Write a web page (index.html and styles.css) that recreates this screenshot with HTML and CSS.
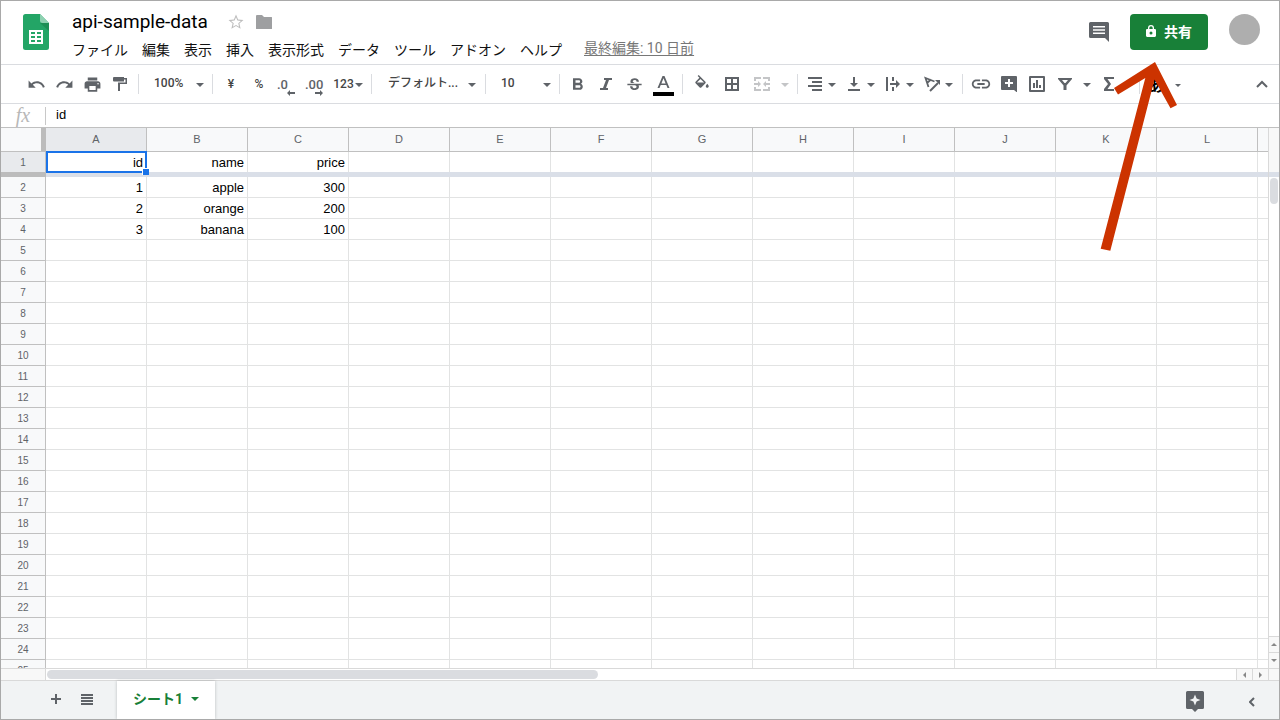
FILE: index.html
```html
<!DOCTYPE html>
<html lang="ja">
<head>
<meta charset="utf-8">
<meta name="viewport" content="width=device-width, initial-scale=1">
<title>api-sample-data</title>
<link rel="stylesheet" href="styles.css">
</head>
<body>
<svg class="sprite" aria-hidden="true">
  <symbol id="caret" viewBox="0 0 8 4"><path d="M0 0h8L4 4z"/></symbol>
</svg>
<div class="app">
  <header class="header">
    <svg class="logo" viewBox="0 0 26 36" aria-hidden="true">
      <path fill="#23a566" d="M2.500 0H17l9 9v24.500a2.500 2.500 0 0 1-2.500 2.500h-21A2.500 2.500 0 0 1 0 33.500v-31A2.500 2.500 0 0 1 2.500 0z"/>
      <path fill="#1c8f55" d="M17 9h9v8z"/>
      <path fill="#8ed1b1" d="M17 0l9 9h-6.500A2.500 2.500 0 0 1 17 6.500z"/>
      <path fill="#fff" fill-rule="evenodd" d="M6 16h14v14H6zM8 18v2h4v-2zm6 0v2h4v-2zM8 22v2h4v-2zm6 0v2h4v-2zM8 26v2h4v-2zm6 0v2h4v-2z"/>
    </svg>
    <div class="doc">
      <div class="title-row">
        <h1 class="title">api-sample-data</h1>
        <button class="plain" aria-label="スター"><svg width="18" height="18" viewBox="0 0 24 24" fill="#bdbdbd"><path d="M22 9.240l-7.190-.62L12 2 9.190 8.630 2 9.240l5.460 4.730L5.820 21 12 17.270 18.180 21l-1.630-7.030L22 9.240zM12 15.900l-4.100 2.500 1.100-4.700-3.600-3.150 4.750-.4L12 5.800l1.850 4.350 4.750.4-3.600 3.150 1.100 4.700z"/></svg></button>
        <button class="plain" aria-label="移動"><svg width="16" height="14" viewBox="0 0 16 14" fill="#9e9fa1"><path d="M1 0h5l2 2h7.500a.5.5 0 0 1 .5.500v11a.5.5 0 0 1-.5.500H.5a.5.5 0 0 1-.5-.5V1a1 1 0 0 1 1-1z"/></svg></button>
      </div>
      <nav class="menu">
        <button>ファイル</button><button>編集</button><button>表示</button><button>挿入</button><button>表示形式</button><button>データ</button><button>ツール</button><button>アドオン</button><button>ヘルプ</button>
        <a class="edited" href="#">最終編集: 10 日前</a>
      </nav>
    </div>
    <div class="actions">
      <button class="plain" aria-label="コメント"><svg width="20" height="20" viewBox="0 0 20 20"><path fill-rule="evenodd" d="M1.500 0h17A1.500 1.500 0 0 1 20 1.500V20l-4-4H1.500A1.500 1.500 0 0 1 0 14.500v-13A1.500 1.500 0 0 1 1.500 0zM4 4v1.500h12V4zm0 3.200v1.600h12V7.200zm0 3.300V12h12v-1.500z"/></svg></button>
      <button class="share"><svg width="10" height="12" viewBox="0 0 10 12" fill="#fff"><path fill-rule="evenodd" d="M2 4V3a3 3 0 0 1 6 0v1h.800c.600 0 1.200.500 1.200 1.200v5.600c0 .700-.600 1.200-1.200 1.200H1.200C.600 12 0 11.500 0 10.800V5.200C0 4.500.600 4 1.200 4zm1.300 0h3.400V3a1.700 1.700 0 0 0-3.400 0zM5 6.500a1.500 1.500 0 1 0 0 3 1.500 1.500 0 0 0 0-3z"/></svg>共有</button>
      <span class="avatar"></span>
    </div>
  </header>

  <div class="toolbar" role="toolbar">
    <button class="tool" aria-label="元に戻す"><svg width="19" height="19" viewBox="0 0 24 24"><path d="M12.500 8c-2.650 0-5.050.990-6.900 2.600L2 7v9h9l-3.620-3.620c1.390-1.160 3.160-1.880 5.120-1.880 3.540 0 6.550 2.310 7.600 5.500l2.370-.780C21.080 11.030 17.150 8 12.500 8z"/></svg></button>
    <button class="tool" aria-label="やり直し"><svg width="19" height="19" viewBox="0 0 24 24"><path d="M18.400 10.600C16.550 8.990 14.150 8 11.500 8c-4.650 0-8.580 3.030-9.960 7.220L3.900 16c1.050-3.190 4.050-5.500 7.600-5.500 1.950 0 3.730.720 5.120 1.880L13 16h9V7l-3.600 3.600z"/></svg></button>
    <button class="tool" aria-label="印刷"><svg width="19" height="19" viewBox="0 0 24 24"><path d="M19 8H5c-1.660 0-3 1.340-3 3v6h4v4h12v-4h4v-6c0-1.660-1.340-3-3-3zm-3 11H8v-5h8v5zm3-7c-.550 0-1-.450-1-1s.450-1 1-1 1 .450 1 1-.450 1-1 1zm-1-9H6v4h12V3z"/></svg></button>
    <button class="tool" aria-label="書式を貼り付け"><svg width="14" height="14" viewBox="0 0 14 14"><path d="M1 0h10v1h3v6H7v7H5V5.500h7.500v-3H11V4.500H1a1 1 0 0 1-1-1V1a1 1 0 0 1 1-1z"/></svg></button>
    <span class="sep"></span>
    <label class="pick pick-short"><select aria-label="ズーム"><option>100%</option></select><svg class="caret"><use href="#caret"/></svg></label>
    <span class="sep"></span>
    <button class="tool">¥</button>
    <button class="tool">%</button>
    <button class="tool decimal">.0<svg width="8" height="6" viewBox="0 0 8 6"><path d="M0 3l3-3v2h5v2H3v2z"/></svg></button>
    <button class="tool decimal">.00<svg width="8" height="6" viewBox="0 0 8 6"><path d="M8 3L5 0v2H0v2h5v2z"/></svg></button>
    <button class="tool number">123<svg class="caret"><use href="#caret"/></svg></button>
    <span class="sep"></span>
    <label class="pick pick-long"><select aria-label="フォント"><option>デフォルト...</option></select><svg class="caret"><use href="#caret"/></svg></label>
    <span class="sep"></span>
    <label class="pick pick-short"><select aria-label="フォントサイズ"><option>10</option></select><svg class="caret"><use href="#caret"/></svg></label>
    <span class="sep"></span>
    <button class="tool" aria-label="太字"><svg width="20" height="20" viewBox="0 0 24 24"><path d="M15.600 11.790c.970-.670 1.650-1.770 1.650-2.790 0-2.260-1.750-4-4-4H6v14h8.040c2.090 0 3.710-1.700 3.710-3.790 0-1.520-.860-2.820-2.150-3.420zM9 7.500h4c.830 0 1.500.670 1.500 1.500s-.670 1.500-1.500 1.500H9zm4.500 9H9v-3h4.500c.830 0 1.500.670 1.500 1.500s-.670 1.500-1.500 1.500z"/></svg></button>
    <button class="tool" aria-label="斜体"><svg width="12" height="12" viewBox="0 0 12 12"><path d="M4 0h8v2H9L6 10h2v2H0v-2h3l3-8H4z"/></svg></button>
    <button class="tool" aria-label="取り消し線"><svg width="19" height="19" viewBox="0 0 24 24"><path d="M6.850 8.080C6.850 5.370 9.450 4 12.240 4c1.640 0 3 .490 3.900 1.280.770.650 1.460 1.730 1.460 3.240h-3.010c0-.310-.050-.590-.150-.850-.290-.860-1.200-1.280-2.250-1.280-1.860 0-2.340 1.020-2.340 1.700 0 .480.250.880.740 1.210.380.250.770.480 1.410.700H7.390c-.210-.340-.540-.890-.540-1.920zM21 13v-2H3v2h9.620c1.150.450 1.960.750 1.960 1.970 0 1-.810 1.670-2.280 1.670-1.540 0-2.930-.540-2.930-2.510H6.400c0 .550.080 1.130.240 1.580.810 2.290 3.290 3.300 5.670 3.300 2.270 0 5.300-.890 5.300-4.050 0-.300-.010-1.160-.480-1.940H21V13z"/></svg></button>
    <button class="tool wide" aria-label="テキストの色"><svg width="21" height="24" viewBox="0 0 21 24"><path d="M9.500 4h2l5 12h-2l-1.200-3H7.700l-1.200 3h-2zm1 2.200L8.400 11.400h4.200z"/><path fill="#000" d="M0 20h21v4H0z"/></svg></button>
    <span class="sep"></span>
    <button class="tool wide" aria-label="塗りつぶしの色"><svg width="18" height="18" viewBox="0 0 24 24"><path d="M16.560 8.940L7.620 0 6.210 1.410l2.380 2.380-5.150 5.150c-.590.590-.590 1.540 0 2.120l5.500 5.500c.290.290.680.440 1.060.440s.770-.150 1.060-.440l5.500-5.500c.590-.580.590-1.530 0-2.120zM5.210 10L10 5.210 14.790 10H5.210zM19 11.500s-2 2.170-2 3.500c0 1.100.900 2 2 2s2-.900 2-2c0-1.330-2-3.500-2-3.500z"/></svg></button>
    <button class="tool wide" aria-label="枠線"><svg width="14" height="14" viewBox="0 0 14 14"><path fill-rule="evenodd" d="M0 0h14v14H0zM2 2v4h4V2zm6 0v4h4V2zM2 8v4h4V8zm6 0v4h4V8z"/></svg></button>
    <button class="tool wide" aria-label="セルを結合" disabled><svg width="16" height="14" viewBox="0 0 16 14"><path d="M0 0h7v2H2v2H0zM9 0h7v4h-2V2H9zM0 10h2v2h5v2H0zM14 10h2v4H9v-2h5zM0 6h4V4l3 3-3 3V8H0zM16 6h-4V4L9 7l3 3V8h4z"/></svg></button>
    <button class="tool drop" aria-label="結合の種類" disabled><svg class="caret"><use href="#caret"/></svg></button>
    <span class="sep"></span>
    <button class="tool combo" aria-label="水平方向の配置"><svg width="18" height="18" viewBox="0 0 18 18"><path d="M2 2h14v2H2zM6 6h10v2H6zM2 10h14v2H2zM6 14h10v2H6z"/></svg><svg class="caret"><use href="#caret"/></svg></button>
    <button class="tool combo" aria-label="垂直方向の配置"><svg width="18" height="18" viewBox="0 0 18 18"><path d="M8 2h2v6h3l-4 4-4-4h3zM3 14h12v2H3z"/></svg><svg class="caret"><use href="#caret"/></svg></button>
    <button class="tool combo" aria-label="テキストを折り返す"><svg width="18" height="18" viewBox="0 0 18 18"><path d="M2 2h2v14H2zM8 2h2v4H8zM8 12h2v4H8zM6 8h6V5l4 4-4 4v-3H6z"/></svg><svg class="caret"><use href="#caret"/></svg></button>
    <button class="tool combo" aria-label="テキストの回転"><svg width="18" height="18" viewBox="0 0 18 18" fill="none" stroke="#5f6368" stroke-width="1.800"><path d="M5.500 12L2.500 3l9 3.500M4 8l4-3.500"/><path stroke-width="2" d="M7 16l8-8"/><path fill="#5f6368" stroke="none" d="M12 5h5v5z"/></svg><svg class="caret"><use href="#caret"/></svg></button>
    <span class="sep"></span>
    <button class="tool" aria-label="リンクを挿入"><svg width="22" height="22" viewBox="0 0 24 24"><path d="M3.900 12c0-1.710 1.390-3.100 3.100-3.100h4V7H7c-2.760 0-5 2.240-5 5s2.240 5 5 5h4v-1.900H7c-1.710 0-3.100-1.390-3.100-3.100zM8 13h8v-2H8v2zm9-6h-4v1.900h4c1.710 0 3.100 1.390 3.100 3.100s-1.390 3.100-3.100 3.100h-4V17h4c2.760 0 5-2.240 5-5s-2.240-5-5-5z"/></svg></button>
    <button class="tool" aria-label="コメントを挿入"><svg width="16" height="16" viewBox="0 0 16 16"><path fill-rule="evenodd" d="M1 0h14a1 1 0 0 1 1 1v15.500L13 14H1a1 1 0 0 1-1-1V1a1 1 0 0 1 1-1zM7 3v3H4v2h3v3h2V8h3V6H9V3z"/></svg></button>
    <button class="tool" aria-label="グラフを挿入"><svg width="16" height="16" viewBox="0 0 16 16"><path fill-rule="evenodd" d="M1 0h14a1 1 0 0 1 1 1v14a1 1 0 0 1-1 1H1a1 1 0 0 1-1-1V1a1 1 0 0 1 1-1zM2 2v12h12V2zM4 7h2v5H4zM7 4h2v8H7zM10 9h2v3h-2z"/></svg></button>
    <button class="tool" aria-label="フィルタを作成"><svg width="14" height="12" viewBox="0 0 14 12"><path fill-rule="evenodd" d="M0 0h14v1L8.500 7.500V12h-3V7.500L0 1zM4 2l2.500 3h1L10 2z"/></svg></button>
    <button class="tool drop" aria-label="フィルタ表示"><svg class="caret"><use href="#caret"/></svg></button>
    <button class="tool" aria-label="関数"><svg width="12" height="14" viewBox="0 0 12 14"><path d="M1 0h10v2H4.500L8 7l-3.500 5H11v2H1v-2l4-5-4-5z"/></svg></button>
    <button class="tool functions" aria-label="その他の関数"></button>
    <span class="sep"></span>
    <button class="tool ime" aria-label="入力ツール">あ</button>
    <button class="tool small" aria-label="入力ツールの選択"><svg class="caret"><use href="#caret"/></svg></button>
    <button class="tool collapse" aria-label="メニューを非表示"><svg width="12" height="8" viewBox="0 0 12 8" fill="none" stroke="#5f6368" stroke-width="2"><path d="M1 7l5-5 5 5"/></svg></button>
  </div>

  <div class="formula">
    <span class="fx">fx</span>
    <input aria-label="数式" value="id">
  </div>

  <main class="sheet">
    <div class="grid">
      <table>
        <colgroup id="cols"></colgroup>
        <thead id="head"></thead>
        <tbody id="body"></tbody>
      </table>
    </div>
    <div class="vscroll">
      <div class="vscroll-head"></div>
      <div class="vscroll-track"><div class="vthumb"></div></div>
      <button class="step" aria-label="上へ"><svg width="6" height="3" viewBox="0 0 6 3"><path d="M0 3h6L3 0z"/></svg></button>
      <button class="step" aria-label="下へ"><svg width="6" height="3" viewBox="0 0 6 3"><path d="M0 0h6L3 3z"/></svg></button>
    </div>
    <div class="hscroll">
      <div class="hscroll-head"></div>
      <div class="hscroll-track"><div class="hthumb"></div></div>
      <button class="step" aria-label="左へ"><svg width="3" height="6" viewBox="0 0 3 6"><path d="M3 0v6L0 3z"/></svg></button>
      <button class="step" aria-label="右へ"><svg width="3" height="6" viewBox="0 0 3 6"><path d="M0 0v6l3-3z"/></svg></button>
    </div>
    <div class="corner"></div>
  </main>

  <footer class="tabs">
    <button class="plain add" aria-label="シートを追加"><svg width="10" height="10" viewBox="0 0 10 10"><path d="M4 0h2v4h4v2H6v4H4V6H0V4h4z"/></svg></button>
    <button class="plain" aria-label="すべてのシート"><svg width="12" height="11" viewBox="0 0 12 11"><path d="M0 0h12v2H0zM0 3h12v2H0zM0 6h12v2H0zM0 9h12v2H0z"/></svg></button>
    <button class="tab">シート1<svg class="caret"><use href="#caret"/></svg></button>
    <div class="tab-actions">
      <button class="plain" aria-label="データ探索"><svg width="18" height="21" viewBox="0 0 18 21"><path fill-rule="evenodd" d="M1.500 0h15A1.500 1.500 0 0 1 18 1.500v15a1.500 1.500 0 0 1-1.500 1.500H12l-3 3-3-3H1.500A1.500 1.500 0 0 1 0 16.500v-15A1.500 1.500 0 0 1 1.500 0zM9 3.500L7.400 7.400 3.500 9l3.900 1.600L9 14.500l1.600-3.900L14.500 9l-3.900-1.600z"/></svg></button>
      <button class="plain" aria-label="サイドパネルを表示"><svg width="6" height="10" viewBox="0 0 6 10" fill="none" stroke="#5f6368" stroke-width="2"><path d="M5 1L1 5l4 4"/></svg></button>
    </div>
  </footer>

  <svg class="pointer" width="78" height="190" viewBox="1100 61 78 190" aria-hidden="true"><path fill="#cc3300" d="M1155 62l22 43-6.500 3.300-16-28.800-44.200 171.200-9.600-2L1145.300 78 1118 94.500l-4-6.500z"/></svg>
</div>
<script src="sheet.js"></script>
</body>
</html>
```
FILE: styles.css
```css
* { box-sizing: border-box; }

body {
  margin: 0;
  font-family: Roboto, "Noto Sans CJK JP", sans-serif;
  color: #000;
  background: #fff;
}

button {
  margin: 0;
  padding: 0;
  border: 0;
  background: none;
  font: inherit;
  color: inherit;
}

svg { flex: none; }
button svg, label svg { fill: #5f6368; }
button svg[fill="none"] { fill: none; }
button svg[fill="#fff"] { fill: #fff; }
button svg[fill="#bdbdbd"] { fill: #bdbdbd; }
button svg[fill="#9e9fa1"] { fill: #9e9fa1; }

.sprite { display: none; }
.caret { width: 8px; height: 4px; }

.app {
  position: relative;
  display: flex;
  flex-direction: column;
  height: 100vh;
  border: 1px solid #a9a9a9;
  overflow: hidden;
}

.plain {
  display: flex;
  align-items: center;
  justify-content: center;
}

.header {
  display: flex;
  align-items: flex-start;
  height: 64px;
  padding-left: 22px;
  padding-right: 19px;
  border-bottom: 1px solid #dadce0;
}

.logo { width: 26px; height: 36px; margin-top: 13px; }
.doc { margin-left: 23px; padding-top: 7px; }
.title-row { display: flex; align-items: center; height: 27px; }
.title {
  margin: 0 19px 0 0;
  font-size: 19px;
  font-weight: 400;
  line-height: 24px;
}
.title-row .plain + .plain { margin-left: 11px; }

.menu {
  display: flex;
  align-items: center;
  gap: 14px;
  height: 30px;
  font-size: 14px;
  line-height: 20px;
  color: #111;
  white-space: nowrap;
}
.edited {
  margin: 0 0 5px 8px;
  color: #777;
  text-underline-offset: 2px;
}

.actions {
  display: flex;
  align-items: flex-start;
  gap: 21px;
  margin-left: auto;
  padding-top: 13px;
}
.actions .plain { height: 36px; }
.share {
  display: flex;
  align-items: center;
  justify-content: center;
  gap: 8px;
  width: 78px;
  height: 36px;
  padding-bottom: 2px;
  border-radius: 4px;
  background: #188038;
  color: #fff;
  font-size: 14px;
  font-weight: 700;
}
.avatar { width: 31px; height: 31px; border-radius: 50%; background: #aeaeae; }

.toolbar {
  display: flex;
  align-items: center;
  height: 39px;
  padding: 0 3px 0 21px;
  border-bottom: 1px solid #dadce0;
  font-size: 12px;
  font-weight: 500;
  color: #444;
}
.tool {
  display: flex;
  flex: none;
  align-items: center;
  justify-content: center;
  width: 28px;
  height: 28px;
}
.tool:disabled svg { fill: #c4c5c7; }
.wide { width: 30px; }
.drop { width: 16px; }
.functions { width: 12px; }
.toolbar .caret { margin-top: 2px; }
.sep { flex: none; width: 1px; height: 20px; margin: 0 4px; background: #dadce0; }

.pick { display: flex; align-items: center; justify-content: space-between; height: 28px; padding: 0 4px 2px 11px; }
.pick .caret { margin-top: 4px; }
.pick-short { width: 65px; }
.pick-long { width: 105px; padding-left: 12px; padding-right: 5px; }
.pick select {
  appearance: none;
  padding: 0;
  border: 0;
  background: none;
  font: inherit;
  color: inherit;
}

.decimal { position: relative; justify-content: flex-start; padding-left: 4px; color: #5f6368; font-size: 13px; }
.decimal svg { position: absolute; right: 6px; bottom: 2px; }
.number { width: 38px; gap: 1px; }
.combo { width: 39px; gap: 4px; justify-content: flex-start; padding-left: 4px; }
.ime { width: 24px; color: #000; font-size: 16px; font-weight: 700; }
.small { width: 20px; }
.small .caret { width: 6px; height: 3px; }
.collapse { margin-left: auto; }

.formula {
  display: flex;
  align-items: center;
  height: 24px;
  border-bottom: 1px solid #c0c0c0;
}
.fx {
  width: 45px;
  height: 18px;
  border-right: 1px solid #c8c8c8;
  font-family: "Liberation Serif", serif;
  font-size: 20px;
  font-style: italic;
  line-height: 16px;
  text-align: center;
  color: #b8b8b8;
}
.formula input {
  flex: 1;
  min-width: 0;
  padding: 0 10px 2px;
  border: 0;
  outline: 0;
  font-family: "Liberation Sans", sans-serif;
  font-size: 13px;
}

.sheet {
  display: grid;
  flex: 1;
  grid-template-columns: minmax(0, 1fr) 11px;
  grid-template-rows: minmax(0, 1fr) 13px;
  min-height: 0;
}
.grid { overflow: hidden; }

table {
  width: 100%;
  table-layout: fixed;
  border-collapse: separate;
  border-spacing: 0;
  font-family: "Liberation Sans", sans-serif;
  font-size: 13px;
}
.col-head { width: 45px; }
.col-data { width: 101px; }
th {
  padding: 0;
  border-right: 1px solid #c0c0c0;
  border-bottom: 1px solid #c0c0c0;
  background: #f8f9fa;
  color: #5f6368;
  font-size: 10px;
  font-weight: 400;
}
thead th { height: 24px; padding-bottom: 1px; font-size: 11px; }
thead th:first-child { border-right: 5px solid #bcbcbc; }
thead th:last-child { border-right: 0; }
tbody tr { height: 21px; }
td {
  height: 21px;
  padding: 2px 3px 0;
  border-right: 1px solid #e2e3e3;
  border-bottom: 1px solid #e2e3e3;
  line-height: 18px;
  text-align: right;
}
td:last-child { border-right: 0; }
th.active { background: #e8eaed; }

.frozen, .frozen td { height: 20px; }
.frozen th, .frozen td { border-bottom: 0; }
.freeze, .freeze td, .freeze th { height: 5px; border: 0; padding: 0; line-height: 0; }
.freeze th { background: #bcbcbc; }
.freeze td { background: #dadfe8; }

.selected { position: relative; }
.selected::before {
  content: "";
  position: absolute;
  inset: -1px -1px -1px 0;
  border: 2px solid #1a73e8;
}
.selected::after {
  content: "";
  position: absolute;
  right: -3px;
  bottom: -3px;
  width: 6px;
  height: 6px;
  border: solid #fff;
  border-width: 1px 0 0 1px;
  background: #1a73e8;
}

.vscroll { display: flex; flex-direction: column; border-left: 1px solid #d9d9d9; }
.vscroll-head { height: 49px; border-bottom: 5px solid #dadfe8; background: #f8f8f8; }
.vscroll-track { flex: 1; padding: 1px; }
.vthumb { height: 26px; border-radius: 5px; background: #dadce0; }
.step {
  display: flex;
  align-items: center;
  justify-content: center;
  background: #f8f8f8;
}
.step svg { fill: #888; }
.vscroll .step { height: 16px; border-top: 1px solid #d9d9d9; }
.hscroll { display: flex; border: solid #d9d9d9; border-width: 1px 0; }
.hscroll-head { width: 45px; border-right: 1px solid #d9d9d9; background: #f8f8f8; }
.hscroll-track { flex: 1; padding: 1px; }
.hthumb { width: 46.4%; height: 9px; border-radius: 5px; background: #dadce0; }
.hscroll .step { width: 16px; border-left: 1px solid #d9d9d9; }
.corner { border: 1px solid #d9d9d9; border-right: 0; background: #f8f8f8; }

.tabs {
  display: flex;
  align-items: center;
  height: 38px;
  padding: 0 24px 0 50px;
  background: #f1f3f4;
}
.tabs > .plain { padding-bottom: 2px; }
.add { margin-right: 20px; }
.tab {
  display: flex;
  align-items: center;
  justify-content: center;
  gap: 8px;
  align-self: stretch;
  width: 98px;
  margin-left: 24px;
  padding-bottom: 4px;
  background: #fff;
  box-shadow: 0 0 3px rgba(60, 64, 67, 0.3);
  color: #188038;
  font-size: 14px;
  font-weight: 700;
}
.tab .caret { fill: #188038; margin-top: 2px; }
.tab-actions { display: flex; align-items: center; gap: 45px; margin-left: auto; padding-top: 3px; }

.pointer { position: absolute; top: 60px; right: 101px; pointer-events: none; }
```
FILE: sheet.js
```js
const columns = [..."ABCDEFGHIJKL", ""];
const rows = [
  ["id", "name", "price"],
  ["1", "apple", "300"],
  ["2", "orange", "200"],
  ["3", "banana", "100"],
];
const rowCount = 25;

document.getElementById("cols").innerHTML =
  '<col class="col-head">' +
  columns.map((name) => (name ? '<col class="col-data">' : "<col>")).join("");

document.getElementById("head").innerHTML =
  "<tr><th></th>" +
  columns.map((name, i) => `<th${i === 0 ? ' class="active"' : ""}>${name}</th>`).join("") +
  "</tr>";

let html = "";
for (let r = 0; r < rowCount; r++) {
  const first = r === 0;
  html += `<tr${first ? ' class="frozen"' : ""}><th${first ? ' class="active"' : ""}>${r + 1}</th>`;
  columns.forEach((_, c) => {
    const selected = first && c === 0 ? ' class="selected"' : "";
    html += `<td${selected}>${(rows[r] && rows[r][c]) || ""}</td>`;
  });
  html += "</tr>";
  if (first) {
    html += `<tr class="freeze"><th></th><td colspan="${columns.length}"></td></tr>`;
  }
}
document.getElementById("body").innerHTML = html;
```
